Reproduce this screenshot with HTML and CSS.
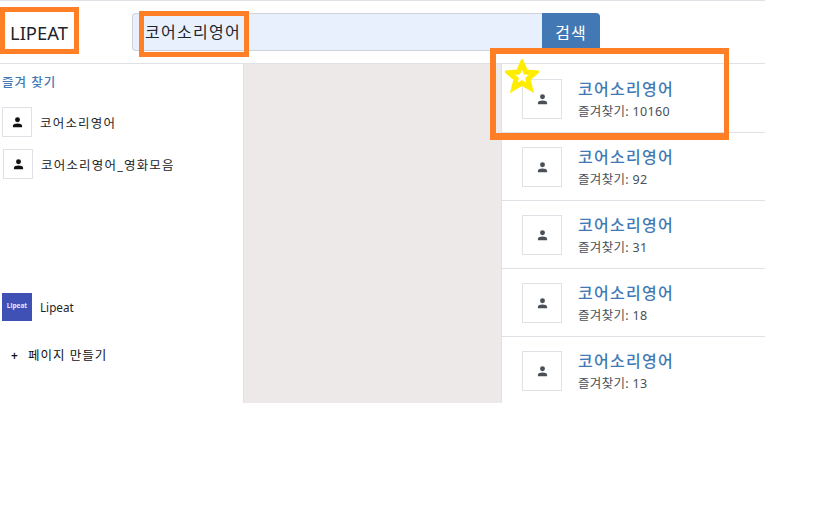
FILE: index.html
```html
<!DOCTYPE html>
<html lang="ko">
<head>
<meta charset="utf-8">
<title>LIPEAT</title>
<link rel="stylesheet" href="styles.css">
</head>
<body>
<svg class="defs" width="0" height="0" aria-hidden="true"><symbol id="person" viewBox="0 0 12 12"><circle cx="6" cy="3" r="2.7"/><path d="M1 11.2V9.6C1 7.9 3.6 7 6 7s5 .9 5 2.6v1.6z"/></symbol></svg>
<div class="page">
  <header class="topbar">
    <div class="brand">LIPEAT</div>
    <form class="search">
      <div class="search-input">코어소리영어</div>
      <button class="search-btn" type="button">검색</button>
    </form>
  </header>
  <main class="columns">
    <aside class="sidebar">
      <h2 class="side-title">즐겨 찾기</h2>
      <ul class="fav-list">
        <li class="fav"><span class="thumb-sm"><svg class="icon-sm"><use href="#person"/></svg></span>코어소리영어</li>
        <li class="fav fav-second"><span class="thumb-sm"><svg class="icon-sm"><use href="#person"/></svg></span>코어소리영어_영화모음</li>
      </ul>
      <div class="own-page">
        <span class="logo">Lipeat</span>
        <span class="own-name">Lipeat</span>
      </div>
      <div class="make-page"><span class="plus">+</span>페이지 만들기</div>
    </aside>
    <section class="middle"></section>
    <section class="results">
      <article class="result">
        <span class="thumb"><svg class="icon"><use href="#person"/></svg></span>
        <div class="info"><div class="name">코어소리영어</div><div class="count">즐겨찾기: 10160</div></div>
      </article>
      <article class="result">
        <span class="thumb"><svg class="icon"><use href="#person"/></svg></span>
        <div class="info"><div class="name">코어소리영어</div><div class="count">즐겨찾기: 92</div></div>
      </article>
      <article class="result">
        <span class="thumb"><svg class="icon"><use href="#person"/></svg></span>
        <div class="info"><div class="name">코어소리영어</div><div class="count">즐겨찾기: 31</div></div>
      </article>
      <article class="result">
        <span class="thumb"><svg class="icon"><use href="#person"/></svg></span>
        <div class="info"><div class="name">코어소리영어</div><div class="count">즐겨찾기: 18</div></div>
      </article>
      <article class="result">
        <span class="thumb"><svg class="icon"><use href="#person"/></svg></span>
        <div class="info"><div class="name">코어소리영어</div><div class="count">즐겨찾기: 13</div></div>
      </article>
    </section>
  </main>
</div>
<div class="mark mark-brand"></div>
<div class="mark mark-search"></div>
<div class="mark mark-result"></div>
<svg class="star" viewBox="0 0 34 34"><path d="M17 4.500l3.700 8.600 9.300.7-7.100 6 2.300 9.100L17 24l-8.200 4.900 2.300-9.100-7.100-6 9.300-.7z" fill="#fff" stroke="#ffed00" stroke-width="5"/></svg>
</body>
</html>
```
FILE: styles.css
```css
* { box-sizing: border-box; }
html, body { margin: 0; padding: 0; background: #fff; }
body { position: relative; width: 829px; height: 509px; overflow: hidden; font-family: "Noto Sans", "Noto Sans CJK KR", sans-serif; color: #212529; }
.defs { position: absolute; }
.page { width: 765px; height: 403px; display: flex; flex-direction: column; }
.topbar { height: 64px; flex: none; border-top: 1px solid #dee2e6; border-bottom: 1px solid #dee2e6; display: flex; align-items: flex-start; }
.brand { width: 132px; padding: 18px 0 0 10px; font-size: 18.400px; line-height: 28px; color: #212529; }
.search { display: flex; margin-top: 12px; width: 468px; height: 38px; }
.search-input { width: 410px; height: 38px; background: #e8f0fe; border: 1px solid #ced4da; border-right: 0; border-radius: 4px 0 0 4px; padding-left: 12px; font-size: 16px; line-height: 37px; letter-spacing: 1.300px; color: #212529; }
.search-btn { width: 58px; height: 38px; background: #4279b4; color: #fff; border: 0; border-radius: 0 4px 0 0; font: inherit; font-size: 16px; letter-spacing: 1px; padding: 0; }
.columns { flex: 1; display: flex; min-height: 0; }
.sidebar { width: 244px; flex: none; border-right: 1px solid #dee2e6; display: flex; flex-direction: column; }
.side-title { margin: 0; padding: 10px 0 0 2px; font-size: 12.500px; line-height: 18px; font-weight: 500; letter-spacing: 1px; color: #4279b4; }
.fav-list { list-style: none; margin: 15px 0 0; padding: 0; }
.fav { display: flex; align-items: center; font-size: 12.500px; letter-spacing: 1.200px; color: #212529; height: 30px; padding-left: 2px; }
.fav-second { margin-top: 12px; padding-left: 3px; }
.thumb-sm { width: 30px; height: 30px; border: 1px solid #dee2e6; display: flex; align-items: center; justify-content: center; margin-right: 8px; }
.icon-sm { width: 11px; height: 11px; fill: #111; }
.own-page { display: flex; align-items: center; margin-top: 113px; padding-left: 2px; height: 30px; }
.logo { width: 30px; height: 28px; background: #3f51b5; color: #e3e6f5; font-size: 6.500px; font-weight: 700; text-align: center; line-height: 25px; margin-right: 8px; }
.own-name { font-size: 11.700px; color: #212529; }
.make-page { display: flex; align-items: center; margin-top: 25px; padding-left: 11px; font-size: 12.500px; line-height: 18px; letter-spacing: 1px; color: #111; }
.plus { width: 17px; font-size: 12px; font-weight: 600; }
.middle { width: 257px; flex: none; background: #ede9e8; }
.results { flex: 1; border-left: 1px solid #dee2e6; padding-top: 1px; }
.result { height: 68px; border-bottom: 1px solid #dee2e6; padding: 14px 0 0 20px; display: flex; }
.result:last-child { border-bottom: 0; }
.thumb { width: 40px; height: 40px; border: 1px solid #dee2e6; display: flex; align-items: center; justify-content: center; margin-right: 16px; flex: none; }
.icon { width: 11px; height: 11px; fill: #495057; }
.info { margin-top: -1px; }
.name { font-size: 16px; line-height: 22px; font-weight: 500; letter-spacing: 1.300px; color: #4279b4; }
.count { font-size: 12.500px; line-height: 18px; margin-top: 3px; letter-spacing: .33px; color: #495057; }
.mark { position: absolute; border: 5px solid #ff7f27; }
.mark-brand { left: 0; top: 7px; width: 79px; height: 47px; }
.mark-search { left: 139px; top: 11px; width: 110px; height: 46px; }
.mark-result { left: 490px; top: 48px; width: 239px; height: 92px; border-width: 6px 5px 7px 6px; }
.star { position: absolute; left: 505px; top: 59px; width: 34px; height: 34px; }
```
